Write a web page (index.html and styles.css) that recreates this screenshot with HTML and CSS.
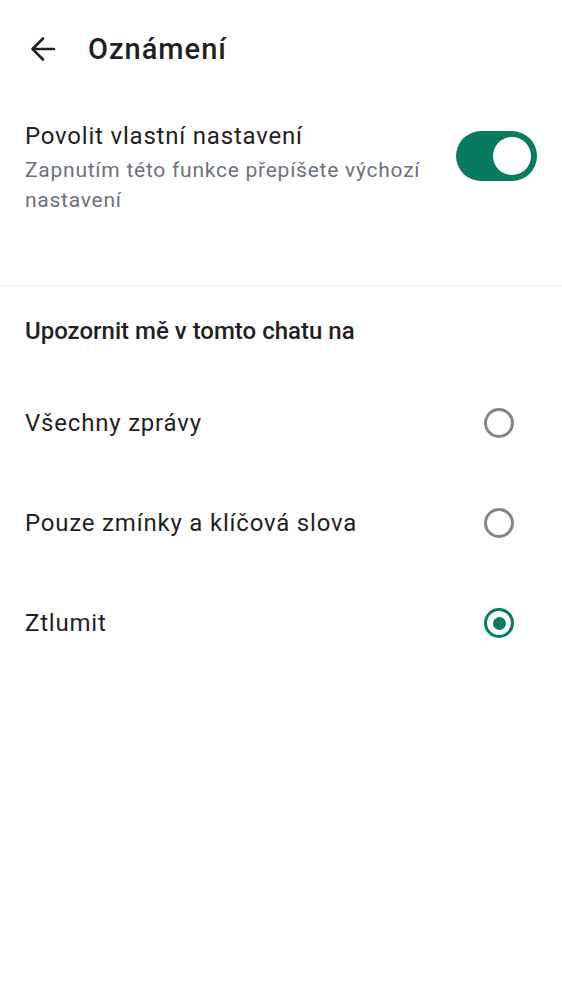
FILE: index.html
```html
<!DOCTYPE html>
<html lang="cs">
<head>
<meta charset="utf-8">
<title>Oznámení</title>
<link rel="stylesheet" href="styles.css">
</head>
<body>
<div class="screen">
  <header class="header">
    <svg class="back" width="26" height="26" viewBox="0 0 26 26" aria-hidden="true">
      <path d="M24 13H3.5M13 2.5L2.5 13 13 23.5" fill="none" stroke="#1f1f24" stroke-width="2.6" stroke-linecap="round" stroke-linejoin="round"/>
    </svg>
    <h1 class="title">Oznámení</h1>
  </header>

  <section class="custom">
    <div class="custom-text">
      <div class="primary">Povolit vlastní nastavení</div>
      <div class="secondary">Zapnutím této funkce přepíšete výchozí nastavení</div>
    </div>
    <div class="toggle on"><span class="knob"></span></div>
  </section>

  <section class="options">
    <h2 class="section-title">Upozornit mě v tomto chatu na</h2>
    <div class="option">
      <span class="label">Všechny zprávy</span>
      <span class="radio"></span>
    </div>
    <div class="option">
      <span class="label">Pouze zmínky a klíčová slova</span>
      <span class="radio"></span>
    </div>
    <div class="option">
      <span class="label">Ztlumit</span>
      <span class="radio checked"></span>
    </div>
  </section>
</div>
</body>
</html>
```

FILE: styles.css
```css
* { box-sizing: border-box; }

html, body {
  margin: 0;
  padding: 0;
  background: #ffffff;
}

body {
  font-family: Roboto, "Noto Sans", Arial, sans-serif;
  color: #1f1f24;
}

.screen {
  width: 562px;
}

.header {
  height: 98px;
  display: flex;
  align-items: center;
  padding-left: 30px;
  gap: 32px;
}

.back {
  display: block;
  flex: none;
}

.title {
  margin: 0;
  font-size: 29px;
  font-weight: 500;
  line-height: 36px;
  letter-spacing: 1px;
  color: #1f1f24;
}

.custom {
  display: flex;
  justify-content: space-between;
  align-items: flex-start;
  padding: 22px 25px 71px 25px;
  border-bottom: 1px solid #ececf0;
}

.custom-text {
  width: 415px;
}

.primary {
  font-size: 24px;
  line-height: 32px;
  letter-spacing: 0.8px;
  color: #1f1f24;
}

.secondary {
  margin-top: 3px;
  font-size: 21px;
  line-height: 30px;
  letter-spacing: 0.75px;
  color: #6c717b;
}

.toggle {
  margin-top: 11px;
  width: 81px;
  height: 50px;
  border-radius: 25px;
  background: #087a5e;
  display: flex;
  align-items: center;
  justify-content: flex-end;
  padding-right: 6px;
  flex: none;
}

.knob {
  width: 38px;
  height: 38px;
  border-radius: 50%;
  background: #ffffff;
}

.section-title {
  margin: 0;
  height: 86px;
  padding: 28px 25px 0 25px;
  font-size: 24px;
  line-height: 32px;
  font-weight: 500;
  color: #1f1f24;
}

.option {
  height: 100px;
  display: flex;
  align-items: center;
  justify-content: space-between;
  padding: 0 48px 0 25px;
}

.label {
  font-size: 24px;
  line-height: 32px;
  letter-spacing: 0.8px;
  color: #1f1f24;
}

.radio {
  width: 30px;
  height: 30px;
  border-radius: 50%;
  border: 3px solid #80868f;
  display: flex;
  align-items: center;
  justify-content: center;
  flex: none;
}

.radio.checked {
  border-color: #087a5e;
}

.radio.checked::after {
  content: "";
  width: 13px;
  height: 13px;
  border-radius: 50%;
  background: #087a5e;
}
```
